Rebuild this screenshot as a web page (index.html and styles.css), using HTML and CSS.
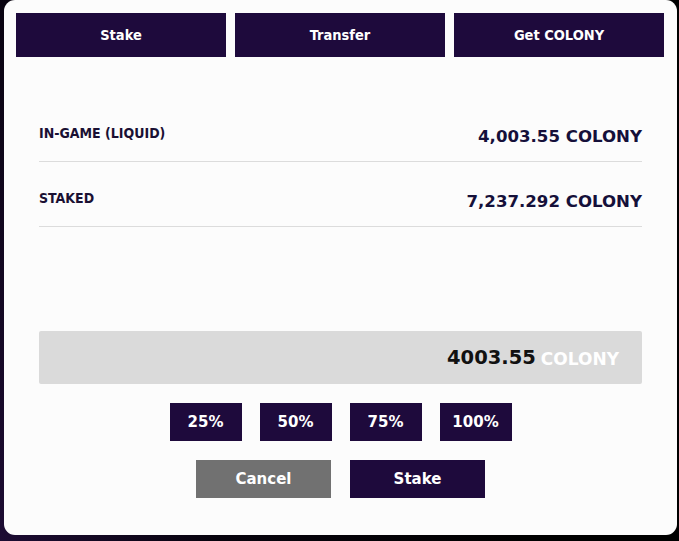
FILE: index.html
```html
<!DOCTYPE html>
<html>
<head>
<meta charset="utf-8">
<link rel="stylesheet" href="styles.css">
</head>
<body>
<div class="card">
  <div class="tabs">
    <button class="btn tab">Stake</button>
    <button class="btn tab">Transfer</button>
    <button class="btn tab">Get COLONY</button>
  </div>
  <div class="content">
    <div class="row">
      <span class="label">IN-GAME (LIQUID)</span>
      <span class="value">4,003.55 COLONY</span>
    </div>
    <div class="row">
      <span class="label">STAKED</span>
      <span class="value">7,237.292 COLONY</span>
    </div>
    <div class="amount">
      <span class="amount-num">4003.55</span>
      <span class="amount-unit">COLONY</span>
    </div>
    <div class="pcts">
      <button class="btn pct">25%</button>
      <button class="btn pct">50%</button>
      <button class="btn pct">75%</button>
      <button class="btn pct">100%</button>
    </div>
    <div class="actions">
      <button class="btn action cancel">Cancel</button>
      <button class="btn action">Stake</button>
    </div>
  </div>
</div>
</body>
</html>
```
FILE: styles.css
```css
html, body {
  margin: 0;
  padding: 0;
}
body {
  width: 679px;
  height: 541px;
  overflow: hidden;
  background: linear-gradient(70deg, #1d0c33 0%, #07030d 25%, #000 60%);
  font-family: "DejaVu Sans", "Liberation Sans", sans-serif;
}
.card {
  box-sizing: border-box;
  margin-left: 4px;
  width: 673px;
  height: 535px;
  background: #fcfcfc;
  border-radius: 11px;
  padding: 13px 12px 0;
}
.btn {
  border: 0;
  margin: 0;
  padding: 0;
  background: #1e0a3c;
  color: #fff;
  font-family: inherit;
  font-weight: bold;
  cursor: pointer;
}
.tabs {
  display: flex;
  gap: 9px;
}
.tab {
  width: 210px;
  height: 44px;
  font-family: "DejaVu Sans Condensed", "DejaVu Sans", sans-serif;
  font-stretch: condensed;
  font-size: 14.5px;
}
.content {
  padding: 40px 23px 0;
}
.row {
  display: flex;
  justify-content: space-between;
  align-items: center;
  height: 64px;
  border-bottom: 1px solid #dcdcdc;
}
.label {
  font-family: "DejaVu Sans Condensed", "DejaVu Sans", sans-serif;
  font-stretch: condensed;
  font-size: 14px;
  font-weight: bold;
  color: #1a1033;
  margin-top: 8px;
}
.value {
  font-size: 16.6px;
  font-weight: bold;
  color: #15103a;
  margin-top: 15px;
}
.amount {
  margin-top: 104px;
  height: 53px;
  background: #dadada;
  border-radius: 2px;
  display: flex;
  justify-content: flex-end;
  align-items: center;
  gap: 5px;
  padding-right: 23px;
}
.amount-num {
  font-size: 19.5px;
  font-weight: bold;
  color: #111;
}
.amount-unit {
  font-size: 17px;
  font-weight: bold;
  color: #fff;
  margin-top: 2px;
}
.pcts {
  display: flex;
  justify-content: center;
  gap: 18px;
  margin-top: 19px;
}
.pct {
  width: 72px;
  height: 38px;
  font-size: 15px;
}
.actions {
  display: flex;
  justify-content: center;
  gap: 19px;
  margin-top: 19px;
}
.action {
  width: 135px;
  height: 38px;
  font-size: 15px;
}
.cancel {
  background: #717171;
}
```
